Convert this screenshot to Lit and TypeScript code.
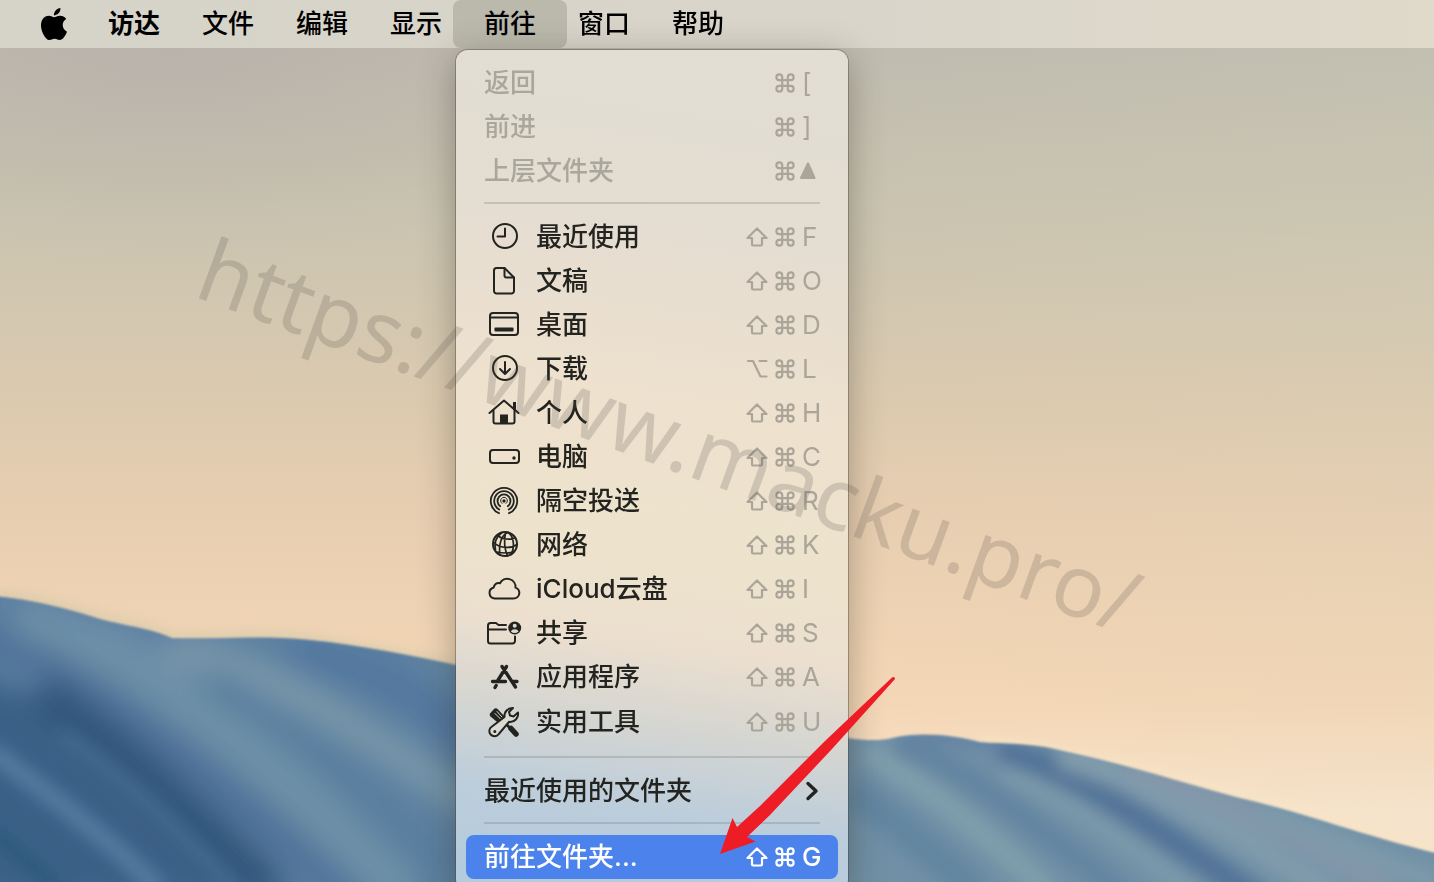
import { LitElement, html, css, svg, nothing } from "lit";
import { customElement, property } from "lit/decorators.js";

const icons: Record<string, unknown> = {
  recents: svg`<circle cx="21" cy="15" r="12"/><path d="M21 7.5V15.5H13.5"/>`,
  documents: svg`<path d="M12.5 3H20.5L30 12.5V26a2.5 2.5 0 0 1-2.5 2.5H12.5A2.5 2.5 0 0 1 10 26V5.5A2.5 2.5 0 0 1 12.5 3Z"/><path d="M20.5 3V10.5a2 2 0 0 0 2 2H30"/>`,
  desktop: svg`<rect x="6" y="4" width="28" height="22" rx="3"/><path d="M6 8.5H34"/><rect class="solid" x="10.5" y="18.5" width="19" height="4" rx="1"/>`,
  downloads: svg`<circle cx="21" cy="15" r="12"/><path d="M21 9V20.5M16 16l5 5 5-5"/>`,
  home: svg`<path d="M5.5 16L20 3.5L34.5 16"/><path d="M9.5 13.5V24.5a2 2 0 0 0 2 2H28.500a2 2 0 0 0 2-2V13.500"/><rect class="solid" x="16" y="17.500" width="8" height="9"/><rect class="solid" x="29" y="5" width="3" height="8"/>`,
  computer: svg`<rect x="6" y="9" width="29" height="13" rx="3"/><circle class="solid" cx="30" cy="17" r="1.700"/>`,
  airdrop: svg`<g stroke-width="1.8"><path d="M15 28.200A13.200 13.200 0 1 1 25 28.200"/><path d="M15.200 24.500A9.800 9.800 0 1 1 24.800 24.500"/><path d="M16.200 21.200A6.500 6.500 0 1 1 23.800 21.200"/><path d="M18 18.500A3.400 3.400 0 1 1 22 18.500" stroke-width="1"/></g><circle class="solid" cx="20" cy="16" r="1.700"/>`,
  network: svg`<circle cx="21" cy="15" r="12"/><g stroke-width="1.700"><path d="M24 3.500C17 6 14.500 16 16 26M24 3.500C30 7 31 18 27 25.500M21.500 3.500C20 11 20.500 20 23.500 27M13.500 6.500C18 10.500 26 11 31 9M9.500 13C15 19.500 27 20 33 15.500M12.500 23C18 24 26 24.500 30 22.500M18 3.500C12 8 10 14 11.500 21"/></g>`,
  icloud: svg`<path d="M10.500 25.500H29.500a5.600 5.600 0 0 0 2-10.900A8.200 8.200 0 0 0 16 10.300A4.600 4.600 0 0 0 9.800 14.500A5.600 5.600 0 0 0 10.500 25.500Z"/>`,
  shared: svg`<path d="M22 8H14.500L12 6H6.500A2.500 2.500 0 0 0 4 8.500V24A2.500 2.500 0 0 0 6.500 26.500H28.500A2.500 2.500 0 0 0 31 24V19.500M4 12.500H22"/><circle class="solid" cx="30.700" cy="11" r="6.500"/><circle class="hole" cx="30.700" cy="8.800" r="2"/><path class="hole" d="M26.900 14.500a3.900 3 0 0 1 7.600 0a5.500 5.500 0 0 1-7.600 0Z"/>`,
  apps: svg`<g stroke-width="3.400"><path d="M22.500 5.500L13.500 20M18 5.500L31.500 26M8.500 20.500H21.500M28.500 20.500H33M12.200 24.500L11 26.500"/></g>`,
  utilities: svg`<path class="solid" d="M6 7.500L10 3Q12 1.500 14 3.500L22 12L15.500 18L6.500 10.500Q5 9 6 7.500Z"/><path class="groove" d="M11 7.500L17 13.500M13 5.500L18 11"/><path d="M19 15L27 23" stroke-width="2.800"/><path d="M27 22.500L32 28" stroke-width="5.500"/><path class="hole edge" d="M34 6.500L29.500 10.500L26 9.500L25 6L29 2A8 8 0 0 0 20.500 11L8 20.500A5.200 5.200 0 1 0 14.800 28L25 15.800A8 8 0 0 0 34 6.500Z"/><circle class="solid" cx="10.800" cy="25.500" r="1.500"/>`,
};

const keyCaps: Record<string, unknown> = {
  shift: svg`<svg class="key" width="22" height="20" viewBox="0 0 22 20" aria-label="Shift"><path d="M11 1.500L20.500 11H16V17.500a1 1 0 0 1-1 1H7a1 1 0 0 1-1-1V11H1.500Z"/></svg>`,
  option: svg`<svg class="key" width="22" height="20" viewBox="0 0 22 20" aria-label="Option"><path d="M2 2H7L14.500 17.500H20.500M13.500 2H20.500"/></svg>`,
  command: svg`<svg class="key" width="20" height="20" viewBox="0 0 20 20" aria-label="Command"><path d="M7.200 7.200V4.100A2.900 2.900 0 1 0 4.200 7.200H15.800A2.900 2.900 0 1 0 12.800 4.100V15.900A2.900 2.900 0 1 0 15.800 12.800H4.200A2.900 2.900 0 1 0 7.200 15.900Z"/></svg>`,
  up: svg`<svg class="key up" width="18" height="20" viewBox="0 0 18 20" aria-label="Up"><path d="M6 2.500L12.500 17H-1Z"/></svg>`,
};

interface Entry {
  label: string;
  icon?: string;
  mod?: "shift" | "option";
  key?: string;
  submenu?: boolean;
  disabled?: boolean;
  selected?: boolean;
}

const groups: Entry[][] = [
  [
    { label: "返回", key: "[", disabled: true },
    { label: "前进", key: "]", disabled: true },
    { label: "上层文件夹", key: "up", disabled: true },
  ],
  [
    { label: "最近使用", icon: "recents", mod: "shift", key: "F" },
    { label: "文稿", icon: "documents", mod: "shift", key: "O" },
    { label: "桌面", icon: "desktop", mod: "shift", key: "D" },
    { label: "下载", icon: "downloads", mod: "option", key: "L" },
    { label: "个人", icon: "home", mod: "shift", key: "H" },
    { label: "电脑", icon: "computer", mod: "shift", key: "C" },
    { label: "隔空投送", icon: "airdrop", mod: "shift", key: "R" },
    { label: "网络", icon: "network", mod: "shift", key: "K" },
    { label: "iCloud云盘", icon: "icloud", mod: "shift", key: "I" },
    { label: "共享", icon: "shared", mod: "shift", key: "S" },
    { label: "应用程序", icon: "apps", mod: "shift", key: "A" },
    { label: "实用工具", icon: "utilities", mod: "shift", key: "U" },
  ],
  [{ label: "最近使用的文件夹", submenu: true }],
  [{ label: "前往文件夹...", mod: "shift", key: "G", selected: true }],
];

@customElement("desktop-wallpaper")
class DesktopWallpaper extends LitElement {
  static styles = css`
    :host {
      display: block;
      background:
        radial-gradient(ellipse 34% 24% at 12% 6%, rgba(176, 164, 164, 0.4), transparent),
        linear-gradient(90deg, transparent 60%, rgba(214, 214, 190, 0.12)),
        linear-gradient(
          180deg,
          #bdbab0 0%,
          #c2beb0 10%,
          #cac4b0 24%,
          #d5c8b0 38%,
          #dfcbaf 49%,
          #e8ceb1 58%,
          #edd2b3 68%,
          #f4d7b6 80%,
          #f9e4cc 92%
        );
    }
    svg {
      display: block;
      width: 100%;
      height: 100%;
    }
  `;

  render() {
    return html`
      <svg viewBox="0 0 1434 882" preserveAspectRatio="none" aria-hidden="true">
        <defs>
          <filter id="soft" x="-20%" y="-20%" width="140%" height="140%"><feGaussianBlur stdDeviation="14" /></filter>
          <filter id="fine" x="-20%" y="-20%" width="140%" height="140%"><feGaussianBlur stdDeviation="8" /></filter>
          <filter id="edge"><feGaussianBlur stdDeviation="0.8" /></filter>
          <filter id="glow"><feGaussianBlur stdDeviation="5" /></filter>
          <clipPath id="left">
            <path d="M-5 596C35 600 65 608 100 619C130 627 150 628 172 638C220 639 265 635 310 640C360 645 410 655 470 668L700 720V890H-5Z" />
          </clipPath>
          <clipPath id="right">
            <path d="M700 720L848 738Q876 742 892 738C925 731 955 736 980 742C1005 744 1030 743 1055 749C1130 765 1190 785 1240 798C1310 814 1360 835 1440 854V890H700Z" />
          </clipPath>
        </defs>
        <path d="M-5 594C35 598 65 606 100 617C130 625 150 626 172 636C220 637 265 633 310 638L470 666" fill="none" stroke="#cfc8a8" stroke-width="8" opacity=".6" filter="url(#glow)" />
        <path d="M980 740C1130 760 1190 785 1240 796L1440 852" fill="none" stroke="#f9e6c4" stroke-width="8" opacity=".6" filter="url(#glow)" />
        <g filter="url(#edge)">
          <g clip-path="url(#left)">
            <rect x="-5" y="580" width="720" height="310" fill="#5c80a0" />
            <g fill="none" filter="url(#soft)">
              <path d="M-40 670L50 700L180 790L300 900H-40Z" fill="#3a6187" />
              <path d="M-40 632C60 652 170 740 360 900" stroke="#4f7199" stroke-width="34" />
              <path d="M20 608C110 642 230 720 410 900" stroke="#6d90a7" stroke-width="52" />
              <path d="M40 690C110 740 180 800 270 890" stroke="#30567a" stroke-width="40" />
              <path d="M160 645C260 660 360 730 480 810" stroke="#7896a9" stroke-width="34" />
              <path d="M210 680C280 720 350 780 440 880" stroke="#597e9f" stroke-width="28" />
              <path d="M290 650C360 665 420 690 480 750" stroke="#53779f" stroke-width="34" />
              <path d="M430 655L480 690" stroke="#6b8da8" stroke-width="18" />
              <path d="M-10 592C60 602 120 622 180 640" stroke="#6080a6" stroke-width="12" />
            </g>
            <g fill="none" filter="url(#fine)">
              <path d="M-10 750C50 795 110 840 160 890" stroke="#567ba2" stroke-width="18" />
              <path d="M60 735C110 765 170 820 235 890" stroke="#446a90" stroke-width="14" />
              <path d="M-10 830L60 890" stroke="#2f587c" stroke-width="16" />
            </g>
          </g>
          <g clip-path="url(#right)">
            <rect x="700" y="700" width="740" height="190" fill="#7190a6" />
            <g fill="none" filter="url(#fine)">
              <path d="M850 790C900 825 940 860 980 895" stroke="#6386a0" stroke-width="34" />
              <path d="M865 750C930 790 990 835 1050 895" stroke="#809fac" stroke-width="22" />
              <path d="M895 745C960 760 1040 830 1130 900" stroke="#6485a1" stroke-width="26" />
              <path d="M900 738C960 734 1000 745 1050 758" stroke="#6280a3" stroke-width="12" />
              <path d="M1000 770C1070 800 1140 850 1200 900" stroke="#7c9aaa" stroke-width="18" />
              <path d="M1000 750C1080 772 1160 832 1260 900" stroke="#527398" stroke-width="26" />
              <path d="M1060 755C1160 785 1250 840 1340 900" stroke="#809bac" stroke-width="26" />
              <path d="M1130 765C1220 795 1320 845 1400 900" stroke="#8497aa" stroke-width="24" />
              <path d="M1260 810C1330 835 1380 860 1440 885" stroke="#7d9aaa" stroke-width="22" />
            </g>
          </g>
        </g>
      </svg>
    `;
  }
}

@customElement("go-menu")
class GoMenu extends LitElement {
  @property({ attribute: false }) groups: Entry[][] = [];

  static styles = css`
    :host {
      display: block;
      box-sizing: border-box;
      padding: 11px 0 12px;
      border-radius: 12px;
      background: linear-gradient(
        188deg,
        #e2ded3 0%,
        #e2ddd2 12%,
        #e5ddd1 24%,
        #eee1ce 42%,
        #ede3cc 60%,
        #ecdfcf 69%,
        #d6d6d1 78%,
        #bccddb 88%,
        #b2cbdd 100%
      );
      box-shadow:
        0 0 0 1px rgba(70, 65, 55, 0.4),
        0 8px 36px rgba(30, 25, 15, 0.34);
      color: #23231f;
    }
    .list {
      list-style: none;
      margin: 0;
      padding: 0;
    }
    .icons {
      padding-bottom: 2px;
    }
    .rule {
      height: 2px;
      margin: 9px 28px 11px;
      border: 0;
      background: rgba(90, 95, 90, 0.22);
    }
    .row {
      display: flex;
      align-items: center;
      box-sizing: border-box;
      width: calc(100% - 20px);
      min-height: 44px;
      margin: 0 10px;
      padding: 0 16px 0 18px;
      border: 0;
      border-radius: 8px;
      background: none;
      color: inherit;
      font: inherit;
      line-height: 32px;
      text-align: left;
    }
    .row:disabled {
      color: #a9a69c;
    }
    .row.selected {
      background: #4b82eb;
      color: #fff;
    }
    .row.large {
      padding-top: 7px;
      padding-bottom: 7px;
    }
    .label {
      flex: 1;
      font-weight: 500;
      white-space: nowrap;
    }
    .icon {
      width: 40px;
      height: 32px;
      margin-right: 12px;
      fill: none;
      stroke: currentColor;
      stroke-width: 2;
      stroke-linecap: round;
      stroke-linejoin: round;
    }
    .icon .solid {
      fill: currentColor;
      stroke: none;
    }
    .icon .hole {
      fill: #dcdbd2;
      stroke: none;
    }
    .icon .edge {
      stroke: currentColor;
    }
    .icon .groove {
      stroke: #dcdbd2;
      stroke-width: 1;
    }
    .shortcut {
      display: flex;
      align-items: center;
      gap: 7px;
      color: #aba599;
    }
    .row.selected .shortcut {
      color: #fff;
      font-weight: 500;
    }
    .letter {
      width: 20px;
      white-space: nowrap;
    }
    .key {
      fill: none;
      stroke: currentColor;
      stroke-width: 2.2;
      stroke-linecap: round;
      stroke-linejoin: round;
    }
    .up {
      display: block;
      overflow: visible;
      fill: currentColor;
    }
    .chevron {
      width: 14px;
      height: 20px;
      margin-right: 3px;
      fill: none;
      stroke: currentColor;
      stroke-width: 3.4;
      stroke-linecap: round;
      stroke-linejoin: round;
    }
  `;

  private row(e: Entry) {
    return html`<li role="none">
      <button
        type="button"
        role="menuitem"
        class="row ${e.selected ? "selected" : ""} ${e.icon === "utilities" ? "large" : ""}"
        ?disabled=${e.disabled}
      >
        ${e.icon ? html`<svg class="icon" viewBox="0 0 40 32" aria-hidden="true">${icons[e.icon]}</svg>` : nothing}
        <span class="label">${e.label}</span>
        ${e.submenu
          ? html`<svg class="chevron" viewBox="0 0 14 20" aria-hidden="true"><path d="M3 2.500L11 10L3 17.500" /></svg>`
          : html`<span class="shortcut">
              ${e.mod ? keyCaps[e.mod] : nothing} ${keyCaps.command}
              <span class="letter">${e.key === "up" ? keyCaps.up : e.key}</span>
            </span>`}
      </button>
    </li>`;
  }

  render() {
    return this.groups.map(
      (g, i) => html`
        ${i ? html`<hr class="rule" />` : nothing}
        <ul class="list ${g[0].icon ? "icons" : ""}" role="menu">
          ${g.map((e) => this.row(e))}
        </ul>
      `,
    );
  }
}

@customElement("app-root")
class AppRoot extends LitElement {
  static styles = css`
    :host {
      display: block;
      position: relative;
      height: 100vh;
      overflow: hidden;
      font-family: Inter, "Noto Sans CJK SC", sans-serif;
      font-size: 26px;
      line-height: 32px;
    }
    .wallpaper {
      position: absolute;
      inset: 0;
    }
    .bar {
      position: relative;
      display: flex;
      align-items: center;
      height: 48px;
      padding-left: 38px;
      background: linear-gradient(90deg, #d6d3c8, #d9d5ca 60%, #dfdaca);
    }
    .apple {
      display: flex;
      padding: 0;
      border: 0;
      background: none;
      margin-right: 17px;
    }
    .menus {
      display: flex;
      list-style: none;
      margin: 0;
      padding: 0;
    }
    .slot {
      position: relative;
    }
    .title {
      display: block;
      height: 48px;
      padding: 0 21px;
      border: 0;
      border-radius: 8px;
      background: none;
      color: #000;
      font: inherit;
      font-weight: 500;
      white-space: nowrap;
    }
    .title.app {
      font-weight: 700;
    }
    .title.open {
      margin: 0 -10px;
      padding: 0 31px;
      background: #bbb9ac;
    }
    .dropdown {
      position: absolute;
      top: 50px;
      left: -7px;
      width: 392px;
    }
    .watermark {
      position: absolute;
      left: 193px;
      top: 201px;
      transform: rotate(20deg);
      transform-origin: 0 92px;
      font-family: "Noto Sans", "Open Sans", sans-serif;
      font-size: 87px;
      line-height: 122px;
      white-space: nowrap;
      color: rgba(80, 76, 68, 0.2);
      pointer-events: none;
    }
    .pointer {
      position: absolute;
      left: 720px;
      top: 676px;
      pointer-events: none;
    }
  `;

  render() {
    const titles = ["访达", "文件", "编辑", "显示", "前往", "窗口", "帮助"];
    return html`
      <desktop-wallpaper class="wallpaper"></desktop-wallpaper>
      <nav class="bar">
        <button class="apple" type="button" aria-label="Apple">
          <svg width="32" height="32" viewBox="0 0 24 24" aria-hidden="true">
            <path d="M12.152 6.896c-.948 0-2.415-1.078-3.960-1.040-2.040.027-3.910 1.183-4.961 3.014-2.117 3.675-.546 9.103 1.519 12.090 1.013 1.454 2.208 3.090 3.792 3.039 1.520-.065 2.090-.987 3.935-.987 1.831 0 2.350.987 3.960.948 1.637-.026 2.676-1.480 3.676-2.948 1.156-1.688 1.636-3.325 1.662-3.415-.039-.013-3.182-1.221-3.220-4.857-.026-3.040 2.480-4.494 2.597-4.559-1.429-2.090-3.623-2.324-4.390-2.376-2-.156-3.675 1.090-4.610 1.090zM15.530 3.830c.843-1.012 1.400-2.427 1.245-3.830-1.207.052-2.662.805-3.532 1.818-.780.896-1.454 2.338-1.273 3.714 1.338.104 2.715-.688 3.559-1.701" />
          </svg>
        </button>
        <ul class="menus">
          ${titles.map(
            (t, i) => html`<li class="slot">
              <button class="title ${i === 0 ? "app" : ""} ${t === "前往" ? "open" : ""}" type="button">${t}</button>
              ${t === "前往" ? html`<go-menu class="dropdown" .groups=${groups}></go-menu>` : nothing}
            </li>`,
          )}
        </ul>
      </nav>
      <div class="watermark">https://www.macku.pro/</div>
      <svg class="pointer" width="176" height="180" viewBox="0 0 176 180" aria-hidden="true">
        <path fill="#ee1c25" d="M0 178L12.500 142L17 151L40 130L105 65L172 1.500Q175 0 175 3L112 73L50 139L27 161L35.500 165.500Z" />
      </svg>
    `;
  }
}
